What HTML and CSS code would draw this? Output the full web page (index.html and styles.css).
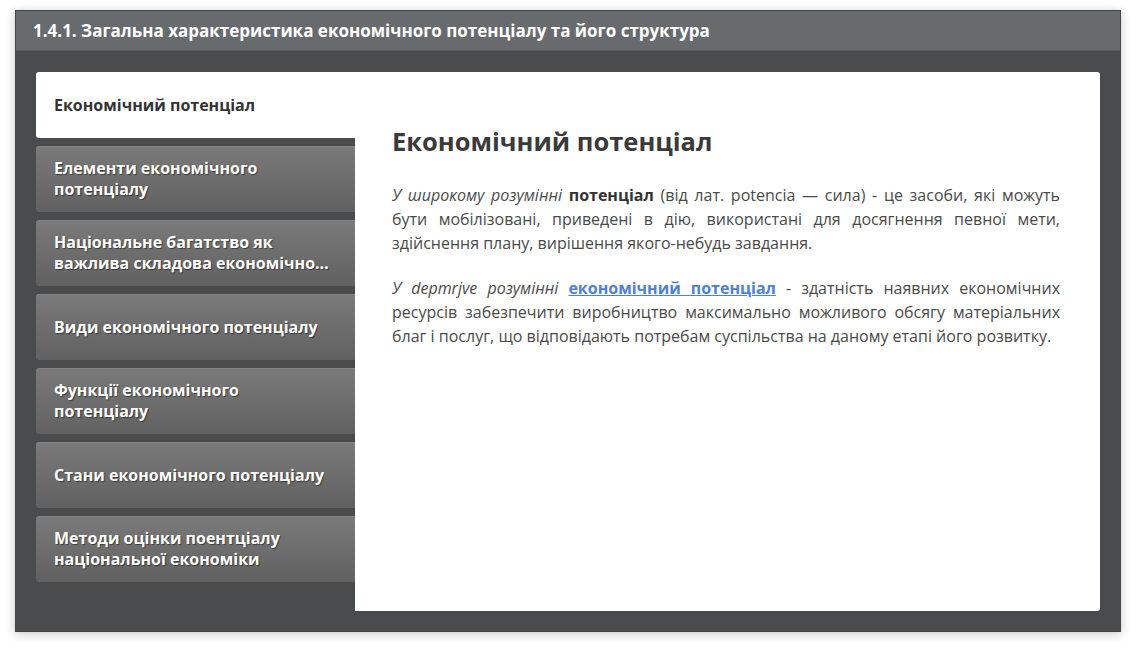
FILE: index.html
```html
<!DOCTYPE html>
<html lang="uk">
<head>
<meta charset="utf-8">
<title>1.4.1. Загальна характеристика економічного потенціалу та його структура</title>
<link rel="stylesheet" href="styles.css">
</head>
<body>
<div class="frame">
  <div class="frame-header">1.4.1. Загальна характеристика економічного потенціалу та його структура</div>
  <div class="frame-body">
    <div class="panel">
      <ul class="tabs">
        <li class="tab active"><span class="tab-label">Економічний потенціал</span></li>
        <li class="tab"><span class="tab-label">Елементи економічного потенціалу</span></li>
        <li class="tab"><span class="tab-label">Національне багатство як важлива складова економічного потенціалу</span></li>
        <li class="tab"><span class="tab-label">Види економічного потенціалу</span></li>
        <li class="tab"><span class="tab-label">Функції економічного потенціалу</span></li>
        <li class="tab"><span class="tab-label">Стани економічного потенціалу</span></li>
        <li class="tab"><span class="tab-label">Методи оцінки поентціалу національної економіки</span></li>
      </ul>
      <div class="content">
        <h2 class="content-title">Економічний потенціал</h2>
        <p class="text"><em>У широкому розумінні</em> <strong>потенціал</strong> (від лат. potencia — сила) - це засоби, які можуть бути мобілізовані, приведені в дію, використані для досягнення певної мети, здійснення плану, вирішення якого-небудь завдання.</p>
        <p class="text"><em>У depmrjve розумінні</em> <a class="term" href="#">економічний потенціал</a> - здатність наявних економічних ресурсів забезпечити виробництво максимально можливого обсягу матеріальних благ і послуг, що відповідають потребам суспільства на даному етапі його розвитку.</p>
      </div>
    </div>
  </div>
</div>
</body>
</html>
```
FILE: styles.css
```css
* { box-sizing: border-box; }
html, body { margin: 0; padding: 0; background: #fff; }
body {
  font-family: "Open Sans", "Noto Sans", sans-serif;
  padding: 10px 15px;
}
.frame {
  width: 1106px;
  height: 622px;
  display: flex;
  flex-direction: column;
  background: #4a4b4d;
  box-shadow: 0 2px 10px rgba(0,0,0,0.22);
  border: 1px solid #444546;
}
.frame-header {
  height: 40px;
  flex: none;
  background: #686b6e;
  color: #fff;
  font-weight: 700;
  font-size: 17px;
  line-height: 40px;
  padding-left: 17px;
  border-bottom: 1px solid #5b5e61;
}
.frame-body {
  flex: 1;
  padding: 21px 20px 20px 20px;
  display: flex;
}
.panel {
  flex: 1;
  display: flex;
}
.tabs {
  list-style: none;
  margin: 0;
  padding: 0;
  width: 319px;
  flex: none;
  display: flex;
  flex-direction: column;
  gap: 8px;
}
.tab {
  height: 66px;
  display: flex;
  align-items: center;
  padding: 0 20px 0 18px;
  background: linear-gradient(#7a7a7a, #616161);
  border-radius: 3px 0 0 3px;
  box-shadow: inset 0 1px 0 rgba(255,255,255,0.08);
  color: #fff;
  font-weight: 700;
  font-size: 16px;
  line-height: 21px;
  text-shadow: 1px 1px 1px rgba(0,0,0,0.45);
}
.tab.active {
  background: #fff;
  color: #333;
  text-shadow: none;
  box-shadow: none;
}
.tab-label {
  display: -webkit-box;
  -webkit-line-clamp: 2;
  -webkit-box-orient: vertical;
  overflow: hidden;
}
.content {
  flex: 1;
  background: #fff;
  border-radius: 0 3px 3px 0;
  padding: 53px 40px 0 37px;
  color: #4a4a4a;
}
.content-title {
  margin: 0 0 26px;
  font-size: 25.5px;
  line-height: 32px;
  font-weight: 700;
  color: #3a3a3a;
}
.text {
  margin: 0 0 21px;
  font-size: 16px;
  line-height: 24px;
  text-align: justify;
}
.text strong { color: #333; }
.term {
  color: #4d80d6;
  font-weight: 700;
  text-decoration: underline;
}
```
